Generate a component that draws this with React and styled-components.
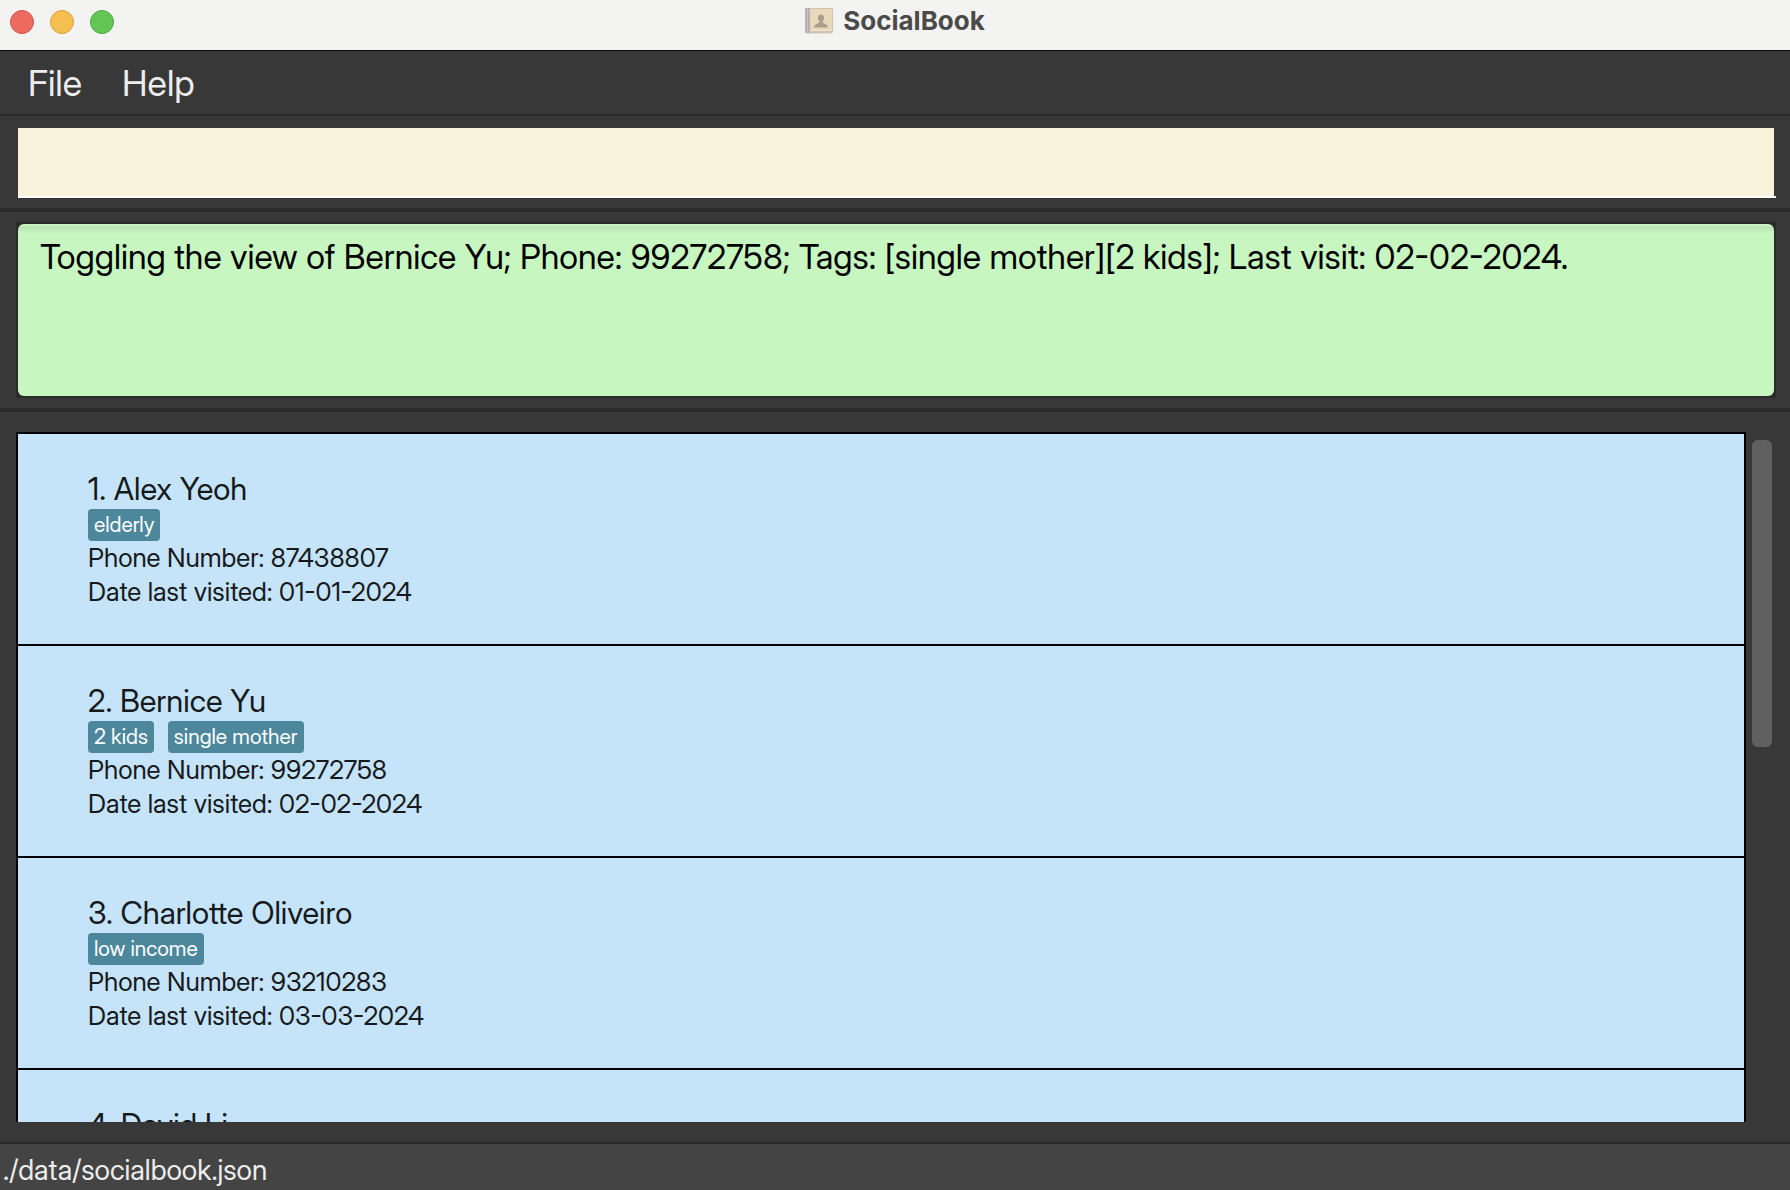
import React from "react";
import styled, { createGlobalStyle } from "styled-components";

const GlobalStyle = createGlobalStyle`
  *, *::before, *::after { box-sizing: border-box; }
  body {
    margin: 0;
    background: #383838;
    font-family: "Inter Display", Inter, Roboto, "Liberation Sans", sans-serif;
  }
`;

const Window = styled.div`
  display: flex;
  flex-direction: column;
  height: 100vh;
  overflow: hidden;
  background: #383838;
`;

const TitleBar = styled.header`
  display: grid;
  grid-template-columns: 1fr auto 1fr;
  height: 51px;
  flex: none;
  padding: 0 10px;
  background: #f3f3f1;
  border-bottom: 1px solid #0c0c0c;
`;

const WindowControls = styled.div`
  display: flex;
  gap: 16px;
  padding-top: 10px;
`;

const ControlDot = styled.button`
  width: 24px;
  height: 24px;
  padding: 0;
  border: 1px solid ${(p) => p.$edge};
  border-radius: 50%;
  background: ${(p) => p.$fill};
`;

const Title = styled.h1`
  display: flex;
  align-items: center;
  gap: 10px;
  height: 42px;
  margin: 0;
  color: #4a4a48;
  font-family: Inter, Roboto, sans-serif;
  font-size: 26px;
  font-weight: 700;
  line-height: 32px;
`;

const MenuBar = styled.nav`
  display: flex;
  flex: none;
  gap: 40px;
  height: 65px;
  padding: 0 28px;
  border-bottom: 2px solid #2b2b2b;
`;

const MenuButton = styled.button`
  padding: 0;
  border: 0;
  background: none;
  color: #ededed;
  font-family: inherit;
  font-size: 36px;
  line-height: 60px;
`;

const CommandPane = styled.form`
  display: flex;
  flex: none;
  padding: 12px 14px 10px 18px;
  border-bottom: 4px solid #2b2b2b;
`;

const CommandFrame = styled.div`
  flex: 1;
  display: flex;
  padding-right: 2px;
  border-bottom: 2px solid #fff;
`;

const CommandInput = styled.input`
  flex: 1;
  min-width: 0;
  height: 68px;
  padding: 0 24px;
  border: 0;
  border-radius: 0;
  outline: 0;
  background: #faf3dc;
  color: #000;
  font-family: inherit;
  font-size: 34px;
`;

const ResultPane = styled.section`
  flex: none;
  padding: 10px 14px 10px 16px;
  border-bottom: 4px solid #2b2b2b;
`;

const ResultFrame = styled.div`
  display: flex;
  padding: 2px;
  background: #2b2b2b;
`;

const ResultText = styled.textarea`
  flex: 1;
  min-width: 0;
  height: 172px;
  padding: 12px 22px;
  border: 0;
  border-radius: 6px;
  outline: 0;
  resize: none;
  overflow: hidden;
  background: linear-gradient(#c7f6c1 0 2px, #b7e3b1 2px, #c7f6c1 10px);
  color: #000;
  font-family: inherit;
  font-size: 34px;
  line-height: 42px;
`;

const ListPane = styled.main`
  display: flex;
  flex: 1;
  min-height: 0;
  gap: 6px;
  padding: 20px 18px 20px 16px;
`;

const PersonList = styled.ol`
  flex: 1;
  min-width: 0;
  margin: 0;
  padding: 0;
  overflow: hidden;
  list-style: none;
  border: 2px solid #000;
  border-bottom: 0;
`;

const PersonCard = styled.li`
  height: 212px;
  padding: 34px 70px;
  border-bottom: 2px solid #000;
  background: #c5e4f9;
  color: #16191c;
`;

const PersonName = styled.h2`
  margin: 0;
  font-size: 31px;
  font-weight: 400;
  line-height: 41px;
`;

const TagRow = styled.div`
  display: flex;
  gap: 14px;
`;

const Tag = styled.span`
  height: 32px;
  padding: 0 6px;
  border-radius: 4px;
  background: #4c879c;
  color: #fff;
  font-size: 21px;
  line-height: 32px;
`;

const Detail = styled.p`
  margin: 0;
  font-size: 26px;
  line-height: 34px;
`;

const ScrollTrack = styled.div`
  flex: none;
  width: 20px;
  padding-top: 8px;
`;

const ScrollThumb = styled.div`
  height: 45%;
  border-radius: 6px;
  background: #606060;
`;

const StatusBar = styled.footer`
  flex: none;
  height: 48px;
  padding: 0 3px;
  border-top: 2px solid #2b2b2b;
  background: #444;
  color: #ededed;
  font-size: 28px;
  line-height: 52px;
`;

const BookIcon = () => (
  <svg width="28" height="28" viewBox="0 0 28 28" aria-hidden="true">
    <rect x="1" y="2" width="26" height="25" rx="1" fill="#dddbd7" />
    <rect x="0" y="1" width="28" height="25" rx="1" fill="#d0c4b0" />
    <rect x="5" y="2" width="22" height="21" fill="#e8d9ba" />
    <rect x="5" y="23" width="22" height="1" fill="#f0e6d0" />
    <rect x="0" y="1" width="5" height="25" fill="#b5b0ae" />
    <rect x="2" y="1" width="1" height="25" fill="#c9c5c3" />
    <path
      d="M16 7.5c-2 0-3.200 1.500-3.100 3.400.1 1.500.7 2.500 1.400 3.200v1.400c-.6.9-5 1.300-5.300 4.900h14c-.3-3.600-4.700-4-5.300-4.900v-1.400c.7-.7 1.300-1.700 1.400-3.200.1-1.900-1.100-3.400-3.100-3.400z"
      fill="#aa9f8c"
    />
  </svg>
);

const controls = [
  { label: "Close", fill: "#ed6a5e", edge: "#d4544a" },
  { label: "Minimize", fill: "#f5bf4f", edge: "#d9a03c" },
  { label: "Zoom", fill: "#62c655", edge: "#4ea840" },
];

const people = [
  { name: "Alex Yeoh", tags: ["elderly"], phone: "87438807", visited: "01-01-2024" },
  { name: "Bernice Yu", tags: ["2 kids", "single mother"], phone: "99272758", visited: "02-02-2024" },
  { name: "Charlotte Oliveiro", tags: ["low income"], phone: "93210283", visited: "03-03-2024" },
  { name: "David Li", tags: [] },
];

export default function App() {
  return (
    <Window>
      <GlobalStyle />
      <TitleBar>
        <WindowControls>
          {controls.map((c) => (
            <ControlDot key={c.label} type="button" aria-label={c.label} $fill={c.fill} $edge={c.edge} />
          ))}
        </WindowControls>
        <Title>
          <BookIcon />
          SocialBook
        </Title>
      </TitleBar>
      <MenuBar>
        <MenuButton type="button">File</MenuButton>
        <MenuButton type="button">Help</MenuButton>
      </MenuBar>
      <CommandPane onSubmit={(e) => e.preventDefault()}>
        <CommandFrame>
          <CommandInput type="text" aria-label="Command" />
        </CommandFrame>
      </CommandPane>
      <ResultPane>
        <ResultFrame>
          <ResultText
            readOnly
            aria-label="Result"
            value="Toggling the view of Bernice Yu; Phone: 99272758; Tags: [single mother][2 kids]; Last visit: 02-02-2024."
          />
        </ResultFrame>
      </ResultPane>
      <ListPane>
        <PersonList>
          {people.map((person, i) => (
            <PersonCard key={person.name}>
              <PersonName>
                {i + 1}. {person.name}
              </PersonName>
              <TagRow>
                {person.tags.map((tag) => (
                  <Tag key={tag}>{tag}</Tag>
                ))}
              </TagRow>
              {person.phone && <Detail>Phone Number: {person.phone}</Detail>}
              {person.visited && <Detail>Date last visited: {person.visited}</Detail>}
            </PersonCard>
          ))}
        </PersonList>
        <ScrollTrack aria-hidden="true">
          <ScrollThumb />
        </ScrollTrack>
      </ListPane>
      <StatusBar>./data/socialbook.json</StatusBar>
    </Window>
  );
}
